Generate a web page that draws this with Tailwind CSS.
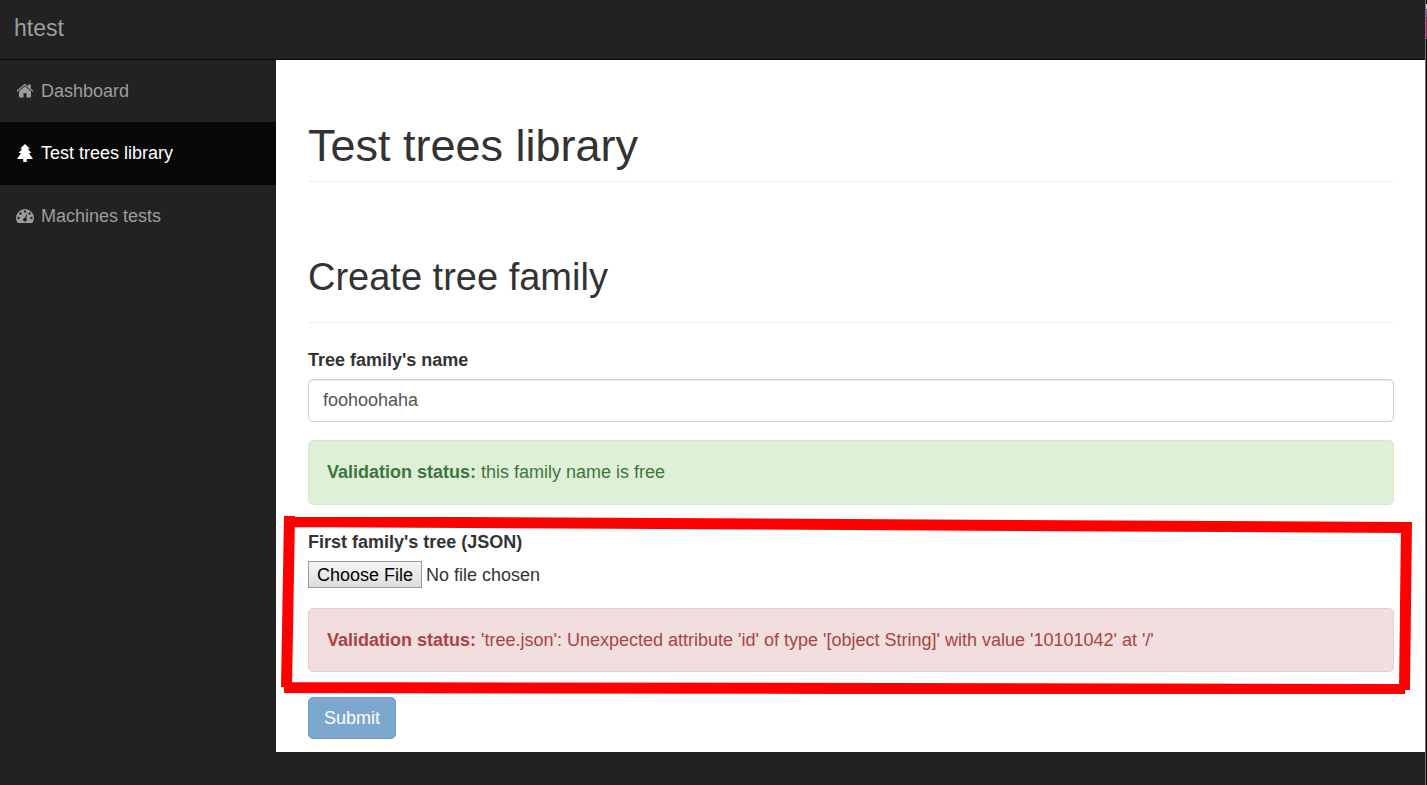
<!DOCTYPE html>
<html lang="en">
<head>
<meta charset="utf-8">
<meta name="viewport" content="width=device-width, initial-scale=1">
<title>htest</title>
<script src="https://cdn.jsdelivr.net/npm/@tailwindcss/browser@4"></script>
</head>
<body class="flex min-h-screen bg-[#222] font-['Liberation_Sans',Arial,sans-serif] text-[18px] leading-[26px] text-[#333]">
<div class="flex min-w-0 flex-1 flex-col">
  <header class="flex h-[60px] items-center border-b border-[#080808] px-3.5 pb-1">
    <a href="#" class="text-[23px] text-[#9d9d9d]">htest</a>
  </header>
  <div class="flex flex-1 items-start">
    <nav class="w-[276px] shrink-0 text-[#9d9d9d]">
      <a href="#" class="flex h-[62px] items-center gap-1.5 px-4">
        <svg class="h-[18px] w-[19px]" viewBox="0 0 19 18" fill="currentColor" aria-hidden="true"><path d="M9 4.300 3 9.500V14.700q0 .8.800.8H7.500V11.300h3v4.200h3.700q.8 0 .8-.8V9.500ZM.6 8.700l7.600-6.400q.8-.6 1.600 0l2.300 2.100V2.500h2.700v4.200L17.400 8.700l-.8 1L9 3.300 1.400 9.700Z"/></svg>
        <span>Dashboard</span>
      </a>
      <a href="#" aria-current="page" class="flex h-[63px] items-center gap-1.5 bg-[#080808] px-4 pb-0.5 text-white">
        <svg class="h-[18px] w-[19px]" viewBox="0 0 19 18" fill="currentColor" aria-hidden="true"><path d="M9 0 14 4.700h-2.300L15.300 9h-2.400L17 15h-6.300v3H7.300v-3H1L5.100 9H2.700l3.600-4.300H4Z"/></svg>
        <span>Test trees library</span>
      </a>
      <a href="#" class="flex h-[62px] items-center gap-1.5 px-4">
        <svg class="h-[18px] w-[19px]" viewBox="0 0 19 18" aria-hidden="true"><path fill="currentColor" d="M0 11a9 9 0 0 1 18 0q0 2.500-1.400 4.600-.2.400-.7.400H2.100q-.5 0-.7-.4Q0 13.500 0 11Z"/><g fill="#222"><circle cx="2.600" cy="11" r="1.200"/><circle cx="4.500" cy="6.500" r="1.200"/><circle cx="9" cy="4.500" r="1.200"/><circle cx="13.500" cy="6.500" r="1.200"/><circle cx="15.400" cy="11" r="1.200"/><circle cx="9" cy="12.700" r="1.900"/><path d="m10.200 7.200 1 .3-1.400 5-1.200-.3Z"/></g></svg>
        <span>Machines tests</span>
      </a>
    </nav>
    <main class="min-w-0 flex-1 bg-white pr-[31px] pl-8 pt-[61px] pb-[13px]">
      <h1 class="border-b border-[#eee] pb-[11px] text-[45px] leading-[49px]">Test trees library</h1>
      <h2 class="border-b border-[#eee] pt-[75px] pb-6 text-[38px] leading-[41px]">Create tree family</h2>
      <form class="pt-6">
        <label for="family" class="block font-bold">Tree family's name</label>
        <input id="family" type="text" value="foohoohaha" class="mt-1.5 block h-[43px] w-full rounded-[5px] border border-[#ccc] px-3.5 text-[#555] shadow-[inset_0_1px_1px_rgba(0,0,0,0.075)]">
        <p class="mt-[18px] rounded-[5px] border border-[#d6e9c6] bg-[#dff0d8] px-[18px] pt-[18px] pb-[19px] text-[#3c763d]"><strong>Validation status:</strong> this family name is free</p>
        <div class="relative pt-6">
          <label for="tree" class="block font-bold">First family's tree (JSON)</label>
          <input id="tree" type="file" class="mt-1.5 block h-[27px] w-full file:mr-1 file:h-[27px] file:border file:border-solid file:border-[#999] file:bg-linear-to-b file:from-[#f6f6f6] file:to-[#ddd] file:px-2 file:pb-0.5 file:text-black">
          <p class="mt-5 rounded-[5px] border border-[#ebccd1] bg-[#f2dede] px-[18px] pt-[18px] pb-[18px] text-[#a94442]"><strong>Validation status:</strong> 'tree.json': Unexpected attribute 'id' of type '[object String]' with value '10101042' at '/'</p>
          <svg class="pointer-events-none absolute top-[11px] -left-[27px] h-[178px] w-[calc(100%+45px)]" viewBox="0 0 1131 178" preserveAspectRatio="none" fill="none" stroke="red" stroke-width="11" aria-hidden="true"><path d="M3 5.500 1128 11.500M1125.500 6 1123.500 174M3 171.500 1124 173.500M8.500 0 5.500 171"/></svg>
        </div>
        <button type="submit" class="mt-[25px] block h-[42px] rounded-[5px] border border-[#6d9dca] bg-[#7ca8d0] px-[15px] text-white">Submit</button>
      </form>
    </main>
  </div>
</div>
<div class="w-0.5 border-l border-[#777] bg-black" aria-hidden="true"><div class="mt-1 h-[5px] bg-[#ccc]"></div><div class="h-2 bg-[#756580]"></div><div class="h-[22px] bg-[#a12859]"></div></div>
</body>
</html>
